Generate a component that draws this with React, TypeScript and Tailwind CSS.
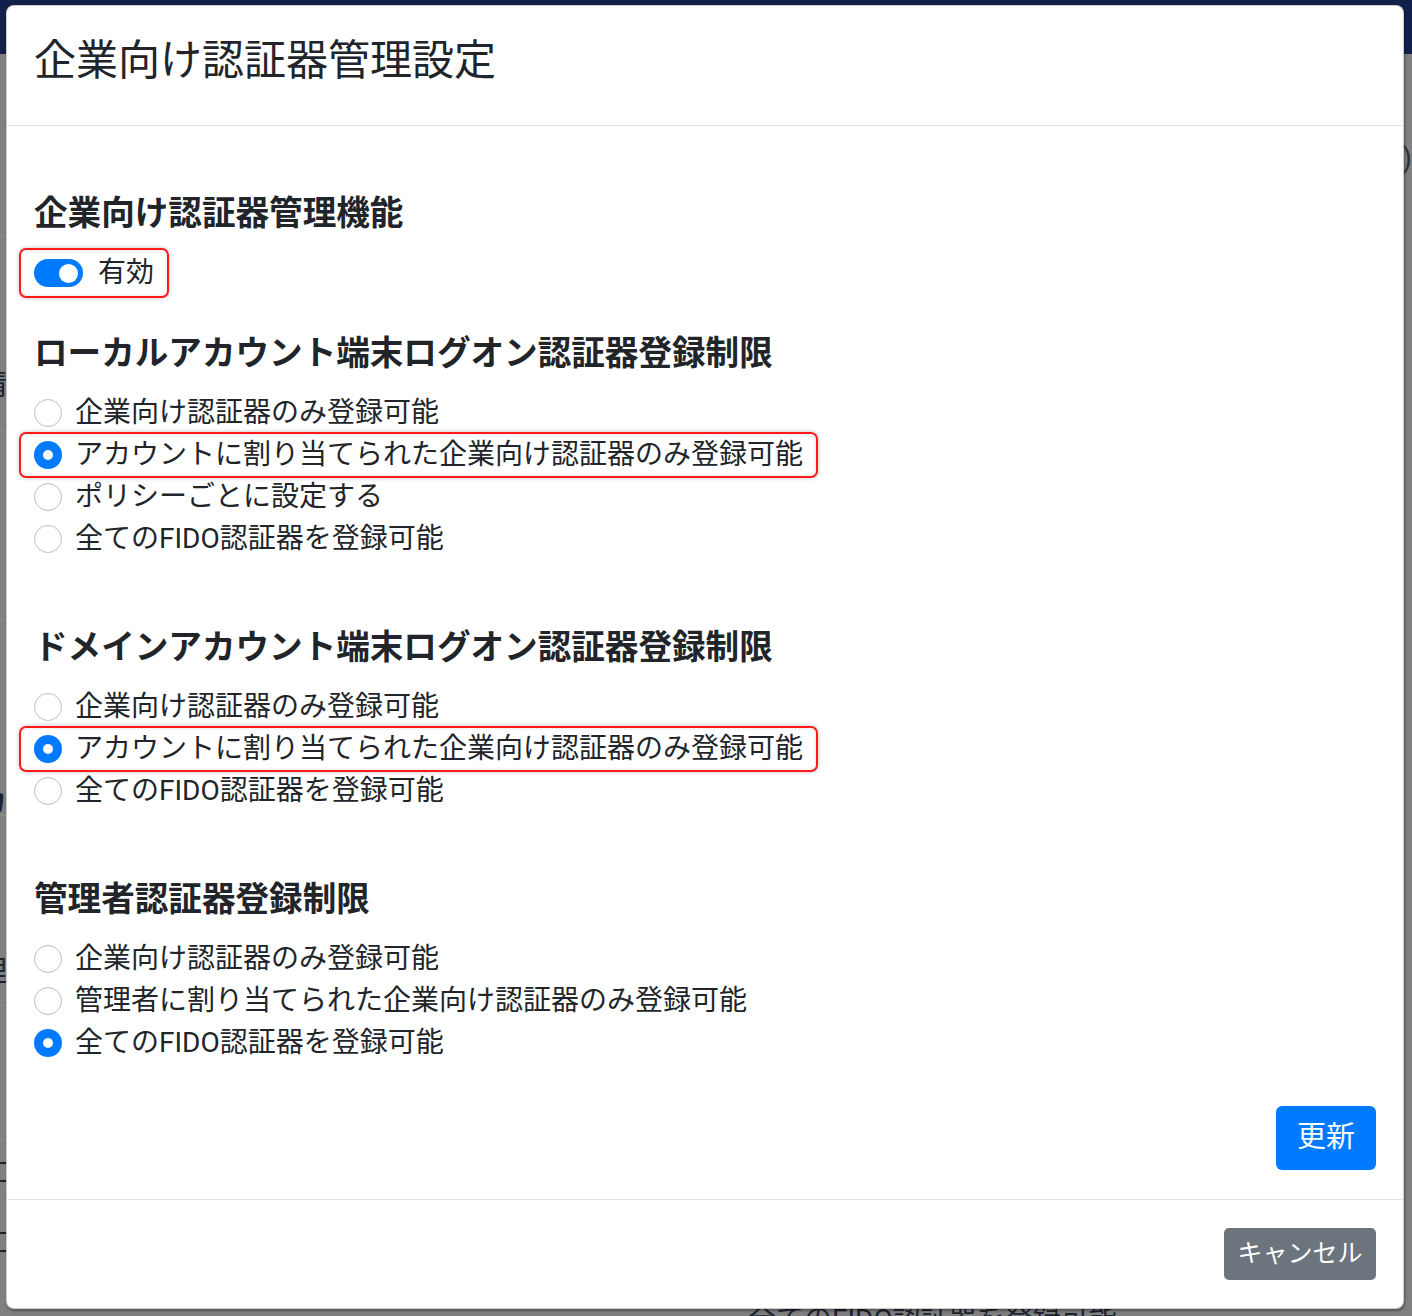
import React from "react";

const FONT = { fontFamily: 'Roboto, "Noto Sans CJK JP", sans-serif' };

function Radio({ checked }: { checked?: boolean }) {
  return checked ? (
    <span className="flex h-[28px] w-[28px] shrink-0 items-center justify-center rounded-full bg-[#007bff]">
      <span className="h-[10px] w-[10px] rounded-full bg-white" />
    </span>
  ) : (
    <span className="h-[28px] w-[28px] shrink-0 rounded-full border border-[#b9bfc6] bg-white" />
  );
}

function Highlight({ children, py = 2 }: { children: React.ReactNode; py?: number }) {
  return (
    <div className="relative inline-flex">
      {children}
      <span
        className={
          "pointer-events-none absolute -left-[15px] -right-[15px] rounded-[7px] border-2 border-[#ff1a1a] shadow-[0_0_4px_rgba(0,0,0,0.25),inset_0_0_4px_rgba(0,0,0,0.12)] " +
          (py === 4 ? "-top-[4px] -bottom-[4px]" : "-top-[2px] -bottom-[2px]")
        }
      />
    </div>
  );
}

function Option({ label, checked, hl }: { label: string; checked?: boolean; hl?: boolean }) {
  const row = (
    <div className="flex h-[42px] items-center gap-[13px] text-[28px] leading-[42px] text-[#212529]">
      <Radio checked={checked} />
      <span className="whitespace-nowrap">{label}</span>
    </div>
  );
  return <div className="flex">{hl ? <Highlight>{row}</Highlight> : row}</div>;
}

function Heading({ children }: { children: React.ReactNode }) {
  return (
    <h5 className="h-[40px] text-[33.6px] font-bold leading-[40px] whitespace-nowrap text-[#212529]">{children}</h5>
  );
}

export default function App() {
  return (
    <div className="relative h-[1316px] w-[1412px] overflow-hidden bg-[#808080]" style={FONT}>
      {/* dimmed page behind */}
      <div className="h-[54px] w-full bg-[#11214b]" />
      <div className="absolute left-0 top-[235px] h-px w-[6px] bg-[#8c8c8c]" />
      <div className="absolute left-0 top-[430px] h-px w-[6px] bg-[#8c8c8c]" />
      <div className="absolute left-0 top-[620px] h-px w-[6px] bg-[#8c8c8c]" />
      <div className="absolute left-0 top-[815px] h-px w-[6px] bg-[#8c8c8c]" />
      <div className="absolute left-0 top-[1005px] h-px w-[6px] bg-[#8c8c8c]" />
      <div className="absolute left-0 top-[1140px] h-px w-[6px] bg-[#8c8c8c]" />
      <div className="absolute left-0 top-[1162px] h-[2px] w-[6px] bg-[#1c2330]" />
      <div className="absolute left-0 top-[1180px] h-[2px] w-[6px] bg-[#1c2330]" />
      <div className="absolute left-0 top-[1232px] h-[2px] w-[6px] bg-[#1c2330]" />
      <div className="absolute left-0 top-[1250px] h-[2px] w-[6px] bg-[#1c2330]" />
      <div className="absolute left-[-22px] top-[365px] text-[29px] leading-[40px] text-[#1c2330]">請</div>
      <div className="absolute left-[-22px] top-[782px] text-[29px] font-bold leading-[40px] text-[#1c2330]">カ</div>
      <div className="absolute left-[-22px] top-[952px] text-[29px] leading-[40px] text-[#1c2330]">理</div>
      <div className="absolute left-[1402px] top-[138px] text-[29px] leading-[40px] text-[#333]">)</div>
      <div className="absolute left-[748px] top-[1300px] whitespace-nowrap text-[28px] leading-[40px] text-[#1c2330]">
        全てのFIDO認証器を登録可能
      </div>

      {/* modal */}
      <div className="absolute left-[6px] top-[5px] flex h-[1304px] w-[1398px] flex-col rounded-[8px] border border-black/20 bg-white shadow-[1px_2px_3px_rgba(0,0,0,0.35)]">
        <div className="h-[120px] shrink-0 border-b border-[#dee2e6] px-[27px] pt-[29px]">
          <h4 className="text-[42px] leading-[52px] font-normal text-[#212529]">企業向け認証器管理設定</h4>
        </div>

        <div className="flex flex-1 flex-col px-[27px] pt-[68px]">
          <Heading>企業向け認証器管理機能</Heading>
          <div className="mt-[18px] flex">
            <Highlight py={4}>
              <div className="flex h-[42px] items-center gap-[15px] text-[28px] leading-[42px] text-[#212529]">
                <span className="flex h-[28px] w-[49px] items-center justify-end rounded-full bg-[#007bff] pr-[5px]">
                  <span className="h-[19px] w-[19px] rounded-full bg-white" />
                </span>
                <span>有効</span>
              </div>
            </Highlight>
          </div>

          <div className="mt-[40px]">
            <Heading>ローカルアカウント端末ログオン認証器登録制限</Heading>
          </div>
          <div className="mt-[18px] flex flex-col">
            <Option label="企業向け認証器のみ登録可能" />
            <Option label="アカウントに割り当てられた企業向け認証器のみ登録可能" checked hl />
            <Option label="ポリシーごとに設定する" />
            <Option label="全てのFIDO認証器を登録可能" />
          </div>

          <div className="mt-[68px]">
            <Heading>ドメインアカウント端末ログオン認証器登録制限</Heading>
          </div>
          <div className="mt-[18px] flex flex-col">
            <Option label="企業向け認証器のみ登録可能" />
            <Option label="アカウントに割り当てられた企業向け認証器のみ登録可能" checked hl />
            <Option label="全てのFIDO認証器を登録可能" />
          </div>

          <div className="mt-[68px]">
            <Heading>管理者認証器登録制限</Heading>
          </div>
          <div className="mt-[18px] flex flex-col">
            <Option label="企業向け認証器のみ登録可能" />
            <Option label="管理者に割り当てられた企業向け認証器のみ登録可能" />
            <Option label="全てのFIDO認証器を登録可能" checked />
          </div>

          <div className="mt-[42px] flex justify-end">
            <button className="flex h-[64px] w-[100px] items-center justify-center rounded-[6px] bg-[#007bff] text-[29px] text-white">
              更新
            </button>
          </div>
        </div>

        <div className="flex h-[109px] shrink-0 justify-end border-t border-[#dee2e6] px-[27px] pt-[28px]">
          <button className="flex h-[52px] w-[152px] items-center justify-center rounded-[5px] bg-[#6c757d] text-[25px] text-white">
            キャンセル
          </button>
        </div>
      </div>
    </div>
  );
}
